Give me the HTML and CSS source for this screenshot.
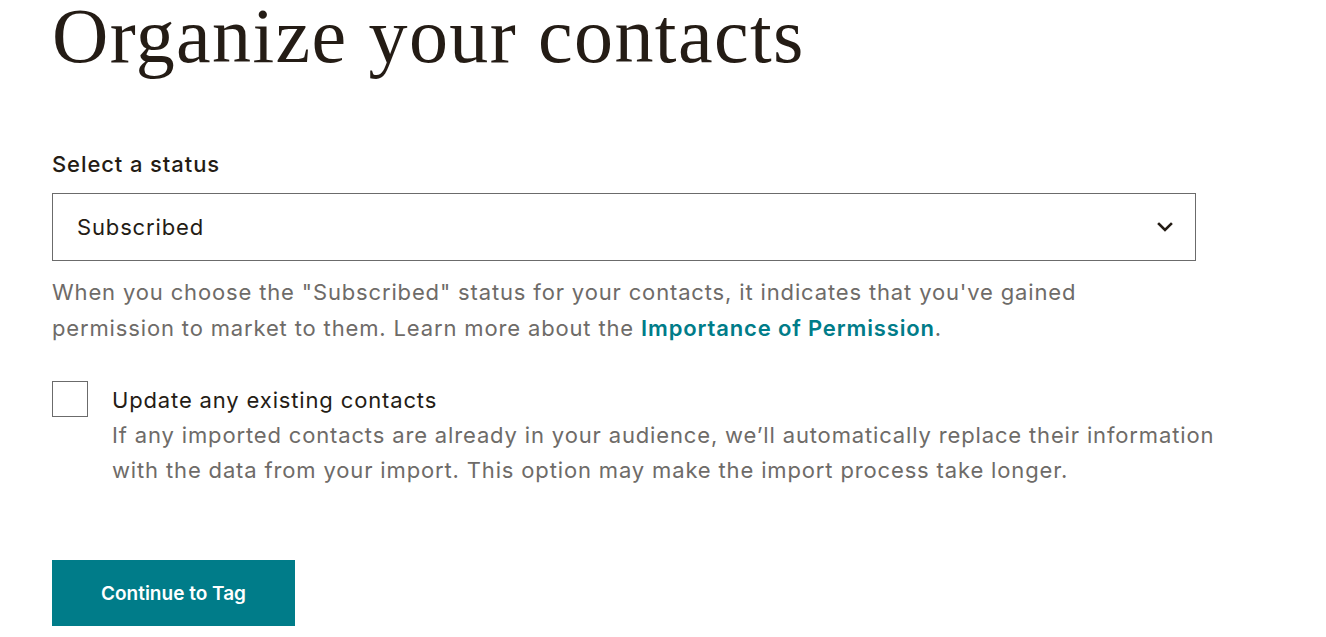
FILE: index.html
```html
<!DOCTYPE html>
<html lang="en">
<head>
<meta charset="utf-8">
<title>Organize your contacts</title>
<link rel="stylesheet" href="styles.css">
</head>
<body>
<main class="page">
  <h1 class="title">Organize your contacts</h1>

  <div class="field">
    <label class="label" for="status">Select a status</label>
    <div class="select">
      <span class="select-value">Subscribed</span>
      <svg class="chevron" width="16" height="12" viewBox="0 0 16 12" aria-hidden="true">
        <path d="M2 3 L8 9 L14 3" fill="none" stroke="#241c15" stroke-width="2.6" stroke-linecap="square"/>
      </svg>
    </div>
    <p class="help">When you choose the "Subscribed" status for your contacts, it indicates that you've gained permission to market to them. Learn more about the <a class="link" href="#">Importance of Permission</a>.</p>
  </div>

  <div class="check-row">
    <span class="checkbox"></span>
    <div class="check-text">
      <div class="check-label">Update any existing contacts</div>
      <p class="check-desc">If any imported contacts are already in your audience, we’ll automatically replace their information with the data from your import. This option may make the import process take longer.</p>
    </div>
  </div>

  <button class="btn" type="button">Continue to Tag</button>
</main>
</body>
</html>
```
FILE: styles.css
```css
* { box-sizing: border-box; }
html, body { margin: 0; padding: 0; background: #fff; }
body {
  font-family: Inter, "Noto Sans", sans-serif;
  color: #241c15;
  letter-spacing: 0.85px;
}
.page {
  padding: 0 0 0 52px;
  width: 1326px;
}
.title {
  margin: 0;
  font-family: "Liberation Serif", serif;
  font-weight: 400;
  font-size: 78px;
  line-height: 80px;
  margin-top: -4px;
  letter-spacing: 1.4px;
  color: #241c15;
}
.field {
  margin-top: 74px;
}
.label {
  display: block;
  font-size: 22px;
  font-weight: 500;
  line-height: 28px;
  letter-spacing: 0.9px;
  margin-bottom: 15px;
}
.select {
  width: 1144px;
  height: 68px;
  border: 1px solid #6b6b6b;
  display: flex;
  align-items: center;
  justify-content: space-between;
  padding: 0 22px 0 24px;
}
.select-value {
  font-size: 22px;
  line-height: 28px;
}
.chevron { display: block; }
.help {
  margin: 13px 0 0;
  width: 1040px;
  font-size: 22px;
  line-height: 36px;
  color: #6e6b68;
}
.link {
  color: #007c89;
  font-weight: 600;
  text-decoration: none;
}
.check-row {
  display: flex;
  gap: 24px;
  margin-top: 35px;
}
.checkbox {
  flex: none;
  width: 36px;
  height: 36px;
  border: 1px solid #6b6b6b;
  background: #fff;
}
.check-text { padding-top: 1px; }
.check-label {
  font-size: 22px;
  line-height: 36px;
}
.check-desc {
  margin: 0;
  width: 1110px;
  font-size: 22px;
  line-height: 35px;
  color: #6e6b68;
}
.btn {
  margin-top: 72px;
  width: 243px;
  height: 66px;
  border: 0;
  background: #007c89;
  color: #fff;
  font-family: Inter, "Noto Sans", sans-serif;
  font-size: 19px;
  font-weight: 600;
  letter-spacing: 0;
  cursor: pointer;
}
```
